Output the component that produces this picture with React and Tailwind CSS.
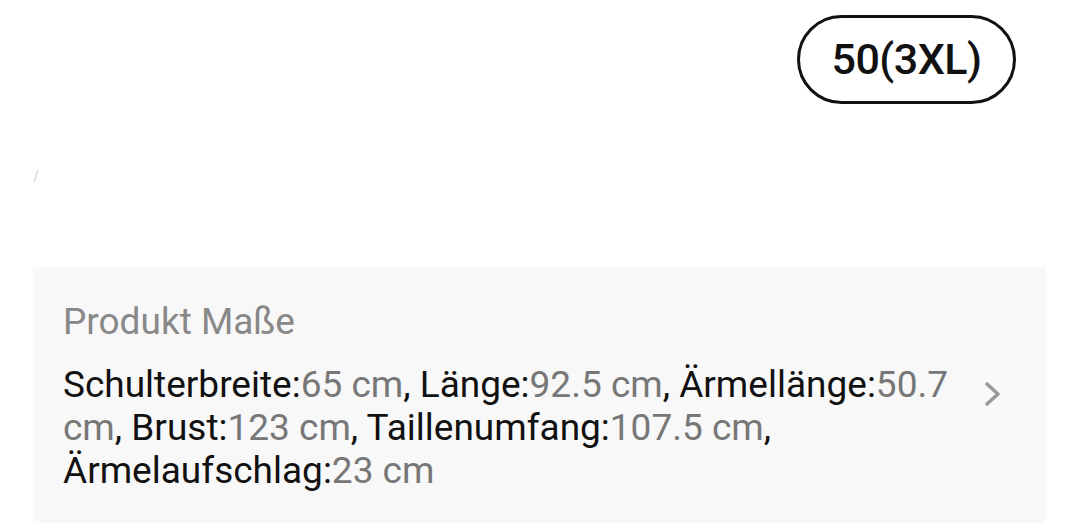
const measures = [
  { label: 'Schulterbreite', value: '65 cm' },
  { label: 'Länge', value: '92.5 cm' },
  { label: 'Ärmellänge', value: '50.7 cm' },
  { label: 'Brust', value: '123 cm' },
  { label: 'Taillenumfang', value: '107.5 cm' },
  { label: 'Ärmelaufschlag', value: '23 cm' },
];

const Chevron = () => (
  <svg width="18" height="26" viewBox="0 0 18 26" className="ml-auto mt-[18px] shrink-0">
    <polyline points="3,3 14,13 3,23" fill="none" stroke="#999" strokeWidth="3.5" strokeLinecap="round" strokeLinejoin="round" />
  </svg>
);

export default function App() {
  return (
    <div className="w-[1080px] h-[526px] bg-white overflow-hidden font-['Roboto',sans-serif]">
      <div className="flex justify-end pt-[15px] pr-[64px]">
        <div className="h-[89px] w-[219px] rounded-full border-[3px] border-[#111] flex items-center justify-center text-[43px] font-medium text-[#111] tracking-[-0.5px]">
          50(3XL)
        </div>
      </div>

      <div className="h-[163px] pl-[35px] pt-[66px]">
        <div className="w-[2px] h-[12px] bg-[#e2e2e2] skew-x-[-15deg]" />
      </div>

      <div className="mx-[33px] w-[1013px] h-[256px] bg-[#f8f8f8] pl-[30px] pr-[44px] pt-[33px]">
        <div className="text-[37px] leading-[44px] text-[#888]">Produkt Maße</div>
        <div className="flex items-start mt-[19px]">
          <p className="w-[900px] text-[37px] leading-[43px] text-[#111]">
            {measures.map((m, i) => (
              <span key={m.label}>
                {m.label}:<span className="text-[#777]">{m.value}</span>
                {i < measures.length - 1 ? ', ' : ''}
              </span>
            ))}
          </p>
          <Chevron />
        </div>
      </div>
    </div>
  );
}
